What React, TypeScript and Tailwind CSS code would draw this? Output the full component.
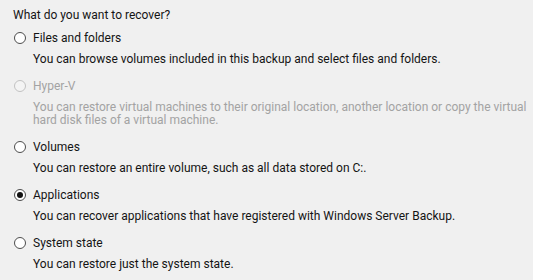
import React from "react";

type Opt = { label: string; desc: string[]; disabled?: boolean; checked?: boolean };

const opts: Opt[] = [
  { label: "Files and folders", desc: ["You can browse volumes included in this backup and select files and folders."] },
  {
    label: "Hyper-V",
    disabled: true,
    desc: [
      "You can restore virtual machines to their original location, another location or copy the virtual",
      "hard disk files of a virtual machine.",
    ],
  },
  { label: "Volumes", desc: ["You can restore an entire volume, such as all data stored on C:."] },
  { label: "Applications", checked: true, desc: ["You can recover applications that have registered with Windows Server Backup."] },
  { label: "System state", desc: ["You can restore just the system state."] },
];

function Radio({ checked, disabled }: { checked?: boolean; disabled?: boolean }) {
  return (
    <div
      className={
        "w-[12px] h-[12px] rounded-full border flex items-center justify-center " +
        (disabled ? "border-[#c2c2c2] bg-[#f4f4f4]" : "border-[#4d4d4d] bg-white")
      }
    >
      {checked && <div className="w-[6px] h-[6px] rounded-full bg-[#111111]" />}
    </div>
  );
}

export default function App() {
  return (
    <div
      className="w-[533px] h-[280px] bg-[#f0f0f0] text-[12px] leading-[16px] text-[#141414] px-[13px] pt-[7px] overflow-hidden"
      style={{ fontFamily: 'Roboto, "Open Sans", sans-serif' }}
    >
      <div>What do you want to recover?</div>
      <div className="flex flex-col gap-[12px] mt-[7px]">
        {opts.map((o) => (
          <div key={o.label} className={o.disabled ? "text-[#a3a3a3]" : ""}>
            <div className="flex items-center">
              <div className="w-[20px] flex pl-[1px]">
                <Radio checked={o.checked} disabled={o.disabled} />
              </div>
              <div>{o.label}</div>
            </div>
            <div className="pl-[20px] mt-[7px] leading-[13px] whitespace-nowrap">
              {o.desc.map((d) => (
                <div key={d}>{d}</div>
              ))}
            </div>
          </div>
        ))}
      </div>
    </div>
  );
}
